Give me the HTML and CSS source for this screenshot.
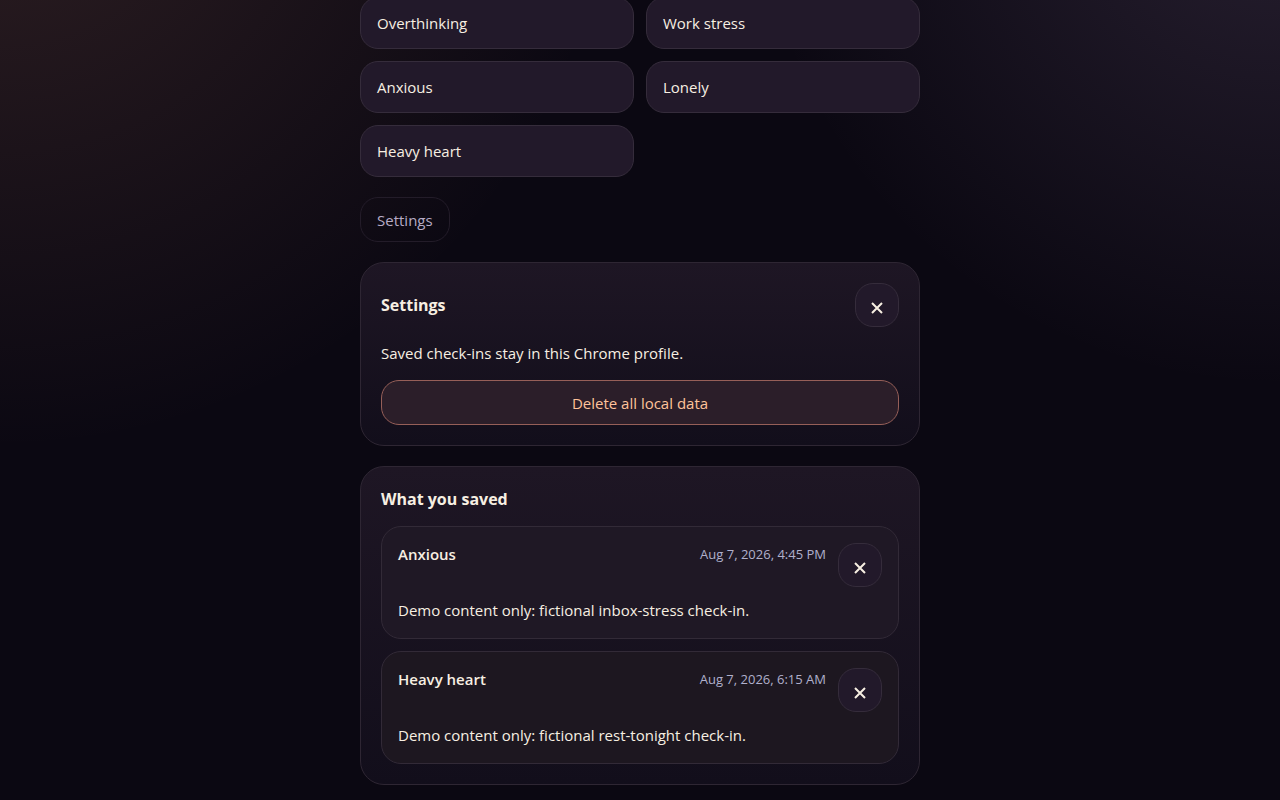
FILE: index.html
```
<!DOCTYPE html>
<html lang="en">
<head>
    <meta charset="UTF-8">
    <meta name="viewport" content="width=device-width, initial-scale=1.0">
    <title>Check-in</title>
    <link rel="stylesheet" href="styles.css">
</head>
<body>
    <main class="container">
        <div class="moods">
            <button type="button" class="mood">Overthinking</button>
            <button type="button" class="mood">Work stress</button>
            <button type="button" class="mood">Anxious</button>
            <button type="button" class="mood">Lonely</button>
            <button type="button" class="mood">Heavy heart</button>
        </div>

        <button type="button" class="settings-toggle">Settings</button>

        <section class="card">
            <div class="card-header">
                <h2>Settings</h2>
                <button type="button" class="icon-button" aria-label="Close settings">
                    <svg viewBox="0 0 12 12" width="12" height="12"><path d="M1 1l10 10M11 1L1 11"/></svg>
                </button>
            </div>
            <p>Saved check-ins stay in this Chrome profile.</p>
            <button type="button" class="danger">Delete all local data</button>
        </section>

        <section class="card">
            <h2>What you saved</h2>
            <div class="entries">
                <article class="entry">
                    <div class="entry-header">
                        <h3>Anxious</h3>
                        <time>Aug 7, 2026, 4:45 PM</time>
                        <button type="button" class="icon-button" aria-label="Delete entry">
                            <svg viewBox="0 0 12 12" width="12" height="12"><path d="M1 1l10 10M11 1L1 11"/></svg>
                        </button>
                    </div>
                    <p>Demo content only: fictional inbox-stress check-in.</p>
                </article>
                <article class="entry warm">
                    <div class="entry-header">
                        <h3>Heavy heart</h3>
                        <time>Aug 7, 2026, 6:15 AM</time>
                        <button type="button" class="icon-button" aria-label="Delete entry">
                            <svg viewBox="0 0 12 12" width="12" height="12"><path d="M1 1l10 10M11 1L1 11"/></svg>
                        </button>
                    </div>
                    <p>Demo content only: fictional rest-tonight check-in.</p>
                </article>
            </div>
        </section>
    </main>
</body>
</html>
```
FILE: styles.css
```
* {
    margin: 0;
    padding: 0;
    box-sizing: border-box;
}

body {
    min-height: 100vh;
    background-color: #0b0812;
    background-image:
        radial-gradient(circle at 0 -170px, rgba(230, 150, 120, 0.16), transparent 620px),
        radial-gradient(circle at 100% -143px, rgba(184, 150, 200, 0.17), transparent 530px);
    background-repeat: no-repeat;
    color: #f7efe2;
    font-family: "Segoe UI", "Open Sans", "Noto Sans", sans-serif;
    font-size: 15px;
    line-height: 25px;
    overflow-x: hidden;
}

.container {
    display: flex;
    flex-direction: column;
    gap: 20px;
    width: 100%;
    max-width: 560px;
    margin: -3px auto 0;
}

button {
    border: 1px solid #352c3b;
    border-radius: 18px;
    background: #22192a;
    color: inherit;
    font: inherit;
    cursor: pointer;
}

.moods {
    display: grid;
    grid-template-columns: 1fr 1fr;
    gap: 12px;
}

.mood {
    min-height: 52px;
    padding: 0 16px;
    text-align: left;
}

.settings-toggle {
    align-self: flex-start;
    min-height: 45px;
    padding: 1px 16px 0;
    border-color: #231c29;
    background: transparent;
    color: #b7abc6;
}

.card {
    display: flex;
    flex-direction: column;
    gap: 14px;
    padding: 20px;
    border: 1px solid #2e2633;
    border-radius: 24px;
    background: linear-gradient(180deg, #1e1624, #120e1b);
}

.card-header {
    display: flex;
    justify-content: space-between;
    align-items: center;
}

h2 {
    font-size: 16px;
    font-weight: 700;
}

h3 {
    font-size: 15px;
    font-weight: 600;
}

.icon-button {
    display: flex;
    justify-content: center;
    align-items: center;
    width: 44px;
    height: 44px;
    padding-top: 6px;
}

.icon-button svg {
    fill: none;
    stroke: currentColor;
    stroke-width: 2;
}

.danger {
    min-height: 45px;
    padding-top: 1px;
    border-color: #965f58;
    background: #2b1e29;
    color: #ffc39a;
}

.entries {
    display: flex;
    flex-direction: column;
    gap: 12px;
}

.entry {
    display: flex;
    flex-direction: column;
    gap: 12px;
    padding: 16px;
    border: 1px solid #322a37;
    border-radius: 20px;
    background: #1f1825;
    line-height: 23px;
}

.entry.warm {
    background: #1d1720;
}

.entry-header {
    display: flex;
    align-items: flex-start;
    gap: 12px;
}

.entry-header h3 {
    flex: 1;
}

time {
    color: #b0b0cc;
    font-size: 13px;
}
```
